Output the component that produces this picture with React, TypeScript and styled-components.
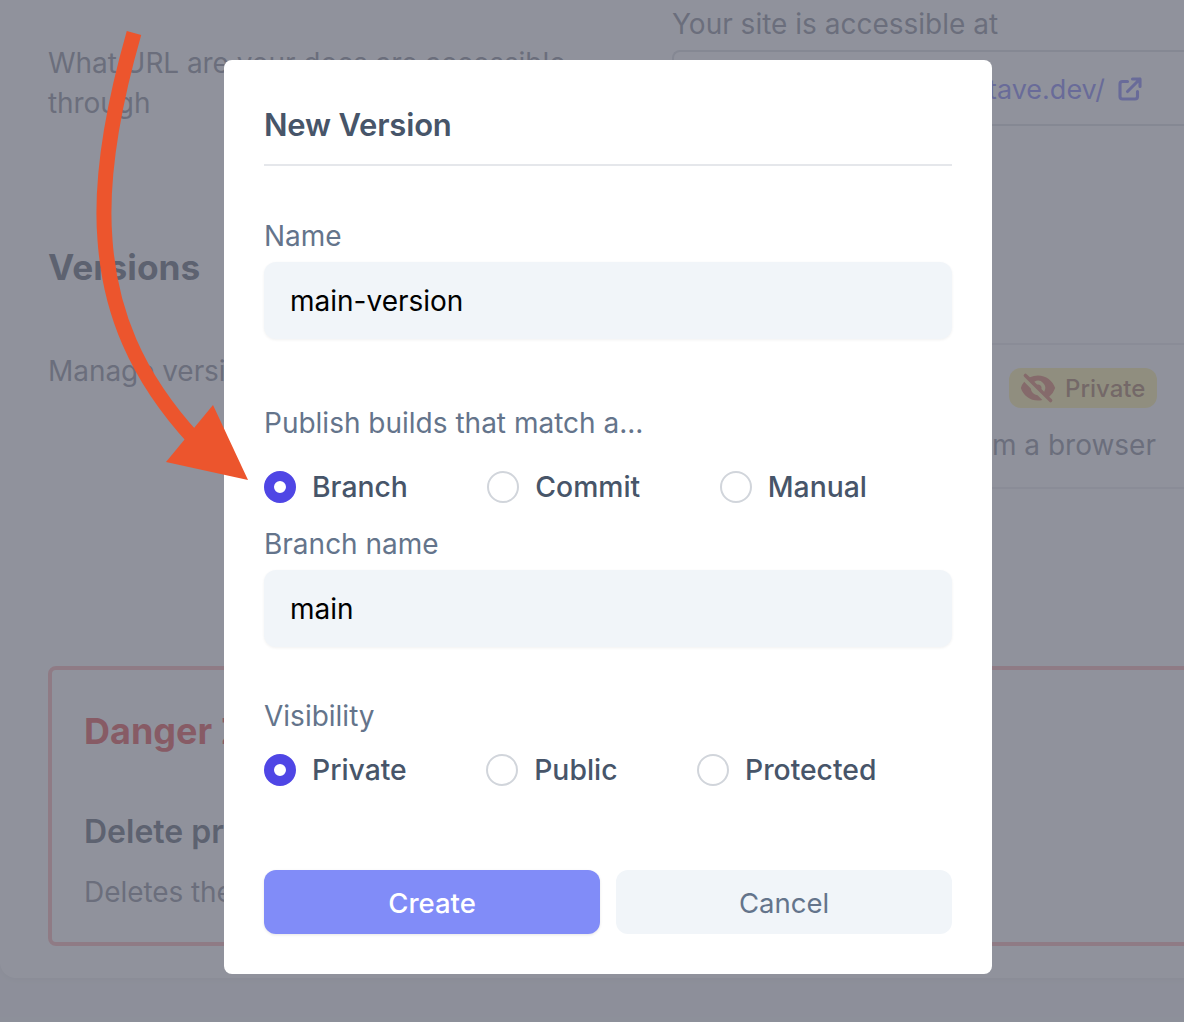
import React from "react";
import styled, { createGlobalStyle } from "styled-components";
import { HiEyeOff, HiOutlineExternalLink } from "react-icons/hi";

const Global = createGlobalStyle`
  html, body { margin: 0; padding: 0; }
  body { font-family: Inter, "Liberation Sans", sans-serif; background: #f3f4f6; }
  * { box-sizing: border-box; }
`;

const Page = styled.div`
  position: relative;
  width: 1184px;
  height: 1022px;
  overflow: hidden;
  background: #f3f4f6;
`;

const Card = styled.main`
  width: 1240px;
  height: 978px;
  padding: 0 0 0 48px;
  background: #ffffff;
  border-radius: 0 0 16px 16px;
  box-shadow: 0 2px 6px rgba(0, 0, 0, 0.06);
  display: flex;
  flex-direction: column;
`;

const Row = styled.section<{ $height: number }>`
  display: grid;
  grid-template-columns: 624px 1fr;
  height: ${(p) => p.$height}px;
`;

const Description = styled.p<{ $top: number }>`
  margin: ${(p) => p.$top}px 0 0;
  width: 540px;
  font-size: 28px;
  line-height: 40px;
  letter-spacing: -0.06px;
  color: #6b7280;
`;

const Heading = styled.h2`
  margin: 0 0 63px;
  padding-top: 49px;
  font-size: 35.3px;
  line-height: 40px;
  font-weight: 700;
  color: #374151;
`;

const FieldLabel = styled.div`
  padding-top: 4px;
  font-size: 28px;
  line-height: 40px;
  color: #6b7280;
`;

const UrlBox = styled.div`
  width: 568px;
  height: 76px;
  margin-top: 6px;
  padding: 2px 95px 0 24px;
  border: 2px solid #d1d5db;
  border-right: 0;
  border-radius: 8px 0 0 8px;
  display: flex;
  align-items: center;
  gap: 10px;
  justify-content: flex-end;
  color: #6366f1;
  font-size: 27px;
  white-space: nowrap;
  svg { flex: none; stroke-width: 2.5; }
`;

const VersionItem = styled.div`
  width: 568px;
  height: 146px;
  margin-top: 144px;
  padding-right: 84px;
  border-top: 2px solid #e5e7eb;
  border-bottom: 2px solid #e5e7eb;
  display: flex;
  flex-direction: column;
  align-items: flex-end;
`;

const Badge = styled.span`
  margin: 23px -1px 0 0;
  width: 148px;
  height: 40px;
  padding-left: 11px;
  display: flex;
  align-items: center;
  gap: 9px;
  border-radius: 12px;
  background: #fef08a;
  color: #8f5a30;
  font-size: 24px;
  font-weight: 500;
  svg { color: #d4623c; }
`;

const VersionText = styled.div`
  margin-top: 17px;
  font-size: 28px;
  line-height: 40px;
  color: #6b7280;
  white-space: nowrap;
`;

const DangerBox = styled.section`
  width: 1180px;
  height: 280px;
  margin-top: 5px;
  padding: 41px 32px 0;
  border: 4px solid #fca5a5;
  border-radius: 8px;
`;

const DangerTitle = styled.h2`
  margin: 0 0 61px;
  font-size: 36px;
  line-height: 40px;
  font-weight: 700;
  color: #dc2626;
`;

const DangerItem = styled.h3`
  margin: 0 0 20px;
  font-size: 32px;
  line-height: 40px;
  font-weight: 600;
  color: #374151;
`;

const Overlay = styled.div`
  position: absolute;
  inset: 0;
  background: rgba(107, 110, 123, 0.75);
`;

const Modal = styled.form`
  position: absolute;
  left: 224px;
  top: 60px;
  width: 768px;
  height: 914px;
  padding: 40px;
  background: #ffffff;
  border-radius: 8px;
  display: flex;
  flex-direction: column;
`;

const Title = styled.h1`
  margin: 0;
  height: 66px;
  padding-top: 5px;
  border-bottom: 2px solid #e5e7eb;
  font-size: 31px;
  letter-spacing: -0.18px;
  line-height: 40px;
  font-weight: 600;
  color: #475569;
`;

const Label = styled.label<{ $top: number }>`
  display: block;
  margin-top: ${(p) => p.$top}px;
  font-size: 28px;
  line-height: 40px;
  color: #64748b;
`;

const TextInput = styled.input`
  display: block;
  width: 100%;
  height: 77px;
  margin-top: 6px;
  padding: 0 26px;
  border: 0;
  outline: 0;
  border-radius: 12px;
  background: #f1f5f9;
  box-shadow: 0 1px 3px rgba(0, 0, 0, 0.06);
  font-family: inherit;
  font-size: 28px;
  color: #000000;
`;

const RadioGroup = styled.div<{ $top: number }>`
  display: flex;
  gap: 79.5px;
  margin-top: ${(p) => p.$top}px;
`;

const RadioOption = styled.label`
  display: flex;
  align-items: center;
  gap: 16px;
  height: 32px;
  font-size: 28.3px;
  font-weight: 500;
  color: #475569;
`;

const RadioDot = styled.span<{ $checked?: boolean }>`
  width: 32px;
  height: 32px;
  border-radius: 50%;
  background: #ffffff;
  border: ${(p) => (p.$checked ? "10px solid #4f46e5" : "2px solid #d1d5db")};
`;

const Actions = styled.div`
  display: grid;
  grid-template-columns: 1fr 1fr;
  gap: 16px;
  margin-top: 84px;
`;

const Button = styled.button<{ $primary?: boolean }>`
  height: 64px;
  padding-top: 2px;
  border: 0;
  border-radius: 12px;
  font-family: inherit;
  font-size: 27.5px;
  font-weight: ${(p) => (p.$primary ? 500 : 400)};
  color: ${(p) => (p.$primary ? "#ffffff" : "#64748b")};
  background: ${(p) => (p.$primary ? "#818cf8" : "#f1f5f9")};
  box-shadow: ${(p) => (p.$primary ? "0 1px 3px rgba(0,0,0,.1)" : "none")};
`;

const ArrowSvg = styled.svg`
  position: absolute;
  left: 0;
  top: 0;
  pointer-events: none;
`;

function Radio({ label, checked }: { label: string; checked?: boolean }) {
  return (
    <RadioOption>
      <RadioDot $checked={checked} />
      {label}
    </RadioOption>
  );
}

export default function App() {
  return (
    <Page>
      <Global />
      <Card>
        <Row $height={199}>
          <Description $top={43}>What URL are your docs are accessible through</Description>
          <div>
            <FieldLabel>Your site is accessible at</FieldLabel>
            <UrlBox>
              https://main--docs.octave.dev/
              <HiOutlineExternalLink size={30} />
            </UrlBox>
          </div>
        </Row>
        <Row $height={462}>
          <div>
            <Heading>Versions</Heading>
            <Description $top={0}>Manage versions of your docs</Description>
          </div>
          <div>
            <VersionItem>
              <Badge>
                <HiEyeOff size={36} />
                Private
              </Badge>
              <VersionText>Viewable only from a browser</VersionText>
            </VersionItem>
          </div>
        </Row>
        <DangerBox>
          <DangerTitle>Danger Zone</DangerTitle>
          <DangerItem>Delete project</DangerItem>
          <Description $top={0}>Deletes the project and all of its data</Description>
        </DangerBox>
      </Card>
      <Overlay />
      <Modal>
        <Title>New Version</Title>
        <Label $top={50}>Name</Label>
        <TextInput readOnly value="main-version" />
        <Label $top={64}>Publish builds that match a...</Label>
        <RadioGroup $top={28}>
          <Radio label="Branch" checked />
          <Radio label="Commit" />
          <Radio label="Manual" />
        </RadioGroup>
        <Label $top={21}>Branch name</Label>
        <TextInput readOnly value="main" />
        <Label $top={49}>Visibility</Label>
        <RadioGroup $top={18}>
          <Radio label="Private" checked />
          <Radio label="Public" />
          <Radio label="Protected" />
        </RadioGroup>
        <Actions>
          <Button type="button" $primary>Create</Button>
          <Button type="button">Cancel</Button>
        </Actions>
      </Modal>
      <ArrowSvg width="300" height="500" viewBox="0 0 300 500">
        <path d="M134 33 C112 110 100 180 105 240 C110 310 135 375 195 440" fill="none" stroke="#ec552d" strokeWidth="15" />
        <polygon points="213,405 248,480 166,462" fill="#ec552d" />
      </ArrowSvg>
    </Page>
  );
}
